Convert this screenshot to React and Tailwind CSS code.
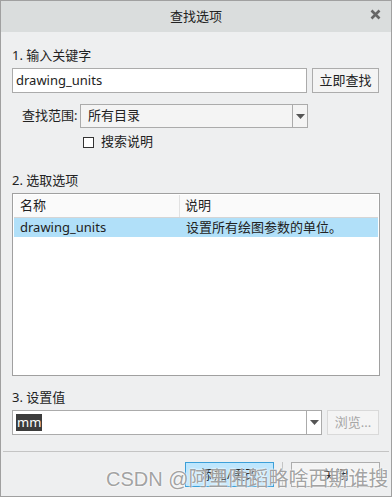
import React from 'react';

const font = { fontFamily: '"Noto Sans", "Noto Sans CJK SC", sans-serif' };

const Arrow = () => (
    <svg width="9" height="5" viewBox="0 0 9 5">
        <path d="M0 0 H9 L4.5 5 Z" fill="#555" />
    </svg>
);

const App = () => {
    return (
        <div className="relative w-[392px] h-[497px] border border-[#a0a0a0] bg-[#eeeff0] flex flex-col text-[13px] text-[#222]" style={font}>
            <div className="h-[31px] bg-[#dadddd] flex items-center justify-center relative shrink-0">
                <span className="text-[13px] text-[#222]">查找选项</span>
                <span className="absolute right-[10px] top-[8px]">
                    <svg width="11" height="11" viewBox="0 0 11 11">
                        <path d="M1.5 1.5 L9.5 9.5 M9.5 1.5 L1.5 9.5" stroke="#666" strokeWidth="2.6" />
                    </svg>
                </span>
            </div>

            <div className="flex flex-col px-[11px]">
                <div className="h-[18px] mt-[14px] leading-[18px]">1. 输入关键字</div>
                <div className="flex gap-[5px] mt-[4px] h-[25px]">
                    <div className="w-[295px] border border-[#ababab] bg-white flex items-center px-[3px]">drawing_units</div>
                    <div className="w-[67px] border border-[#acacac] bg-[#f4f4f4] flex items-center justify-center">立即查找</div>
                </div>

                <div className="flex items-center mt-[11px] h-[24px]">
                    <span className="w-[68px] pl-[10px]">查找范围:</span>
                    <div className="w-[228px] h-full border border-[#ababab] bg-[#f4f4f4] flex">
                        <div className="flex-1 flex items-center px-[7px]">所有目录</div>
                        <div className="w-[15px] border-l border-[#ababab] flex items-center justify-center"><Arrow /></div>
                    </div>
                </div>

                <div className="flex items-center mt-[6px] h-[16px] pl-[71px]">
                    <div className="w-[11px] h-[11px] border border-[#333] bg-white" />
                    <span className="ml-[7px]">搜索说明</span>
                </div>

                <div className="h-[18px] mt-[21px] leading-[18px]">2. 选取选项</div>
                <div className="mt-[4px] h-[183px] border border-[#a0a0a0] bg-white p-[1px] flex flex-col">
                    <div className="h-[23px] bg-[#fafafa] border-b border-[#d5d5d5] flex">
                        <div className="w-[166px] border-r border-[#e2e2e2] flex items-center pl-[6px]">名称</div>
                        <div className="flex-1 flex items-center pl-[5px]">说明</div>
                    </div>
                    <div className="h-[19px] bg-[#b1e0f9] flex">
                        <div className="w-[166px] flex items-center pl-[6px]">drawing_units</div>
                        <div className="flex-1 flex items-center pl-[6px]">设置所有绘图参数的单位。</div>
                    </div>
                </div>

                <div className="h-[18px] mt-[12px] leading-[18px]">3. 设置值</div>
                <div className="flex gap-[5px] mt-[4px] h-[25px]">
                    <div className="w-[310px] border border-[#ababab] bg-white flex">
                        <div className="flex-1 flex items-center pl-[3px]">
                            <span className="bg-[#3c3c3c] text-white leading-[17px] px-[1px]">mm</span>
                        </div>
                        <div className="w-[15px] border-l border-[#ababab] flex items-center justify-center"><Arrow /></div>
                    </div>
                    <div className="w-[52px] border border-[#d9d9d9] bg-[#f4f4f4] text-[#a6a6a6] flex items-center justify-center">浏览...</div>
                </div>
            </div>

            <div className="mt-[16px] mx-[2px] border-t border-[#c4c4c4]" />

            <div className="flex justify-end items-center gap-[8px] px-[11px] mt-[10px]">
                <div className="w-[89px] h-[25px] border border-[#3c9fd8] bg-[#bee6fd] flex items-center justify-center">添加/更改</div>
                <div className="w-px h-[25px] bg-[#c4c4c4]" />
                <div className="w-[89px] h-[25px] border border-[#adadad] bg-[#f4f4f4] flex items-center justify-center">关闭</div>
            </div>

            <div
                className="absolute left-[105px] top-[464px] text-[20px] leading-[28px] text-[#8a8a8a]/80 whitespace-nowrap pointer-events-none"
                style={{ fontFamily: '"Liberation Sans", "Noto Sans CJK SC", sans-serif', textShadow: '0 0 2px #fff, 0 0 2px #fff' }}
            >
                CSDN @阿里陆蹈略啥西斯谁搜
            </div>
        </div>
    );
};

export default App;
